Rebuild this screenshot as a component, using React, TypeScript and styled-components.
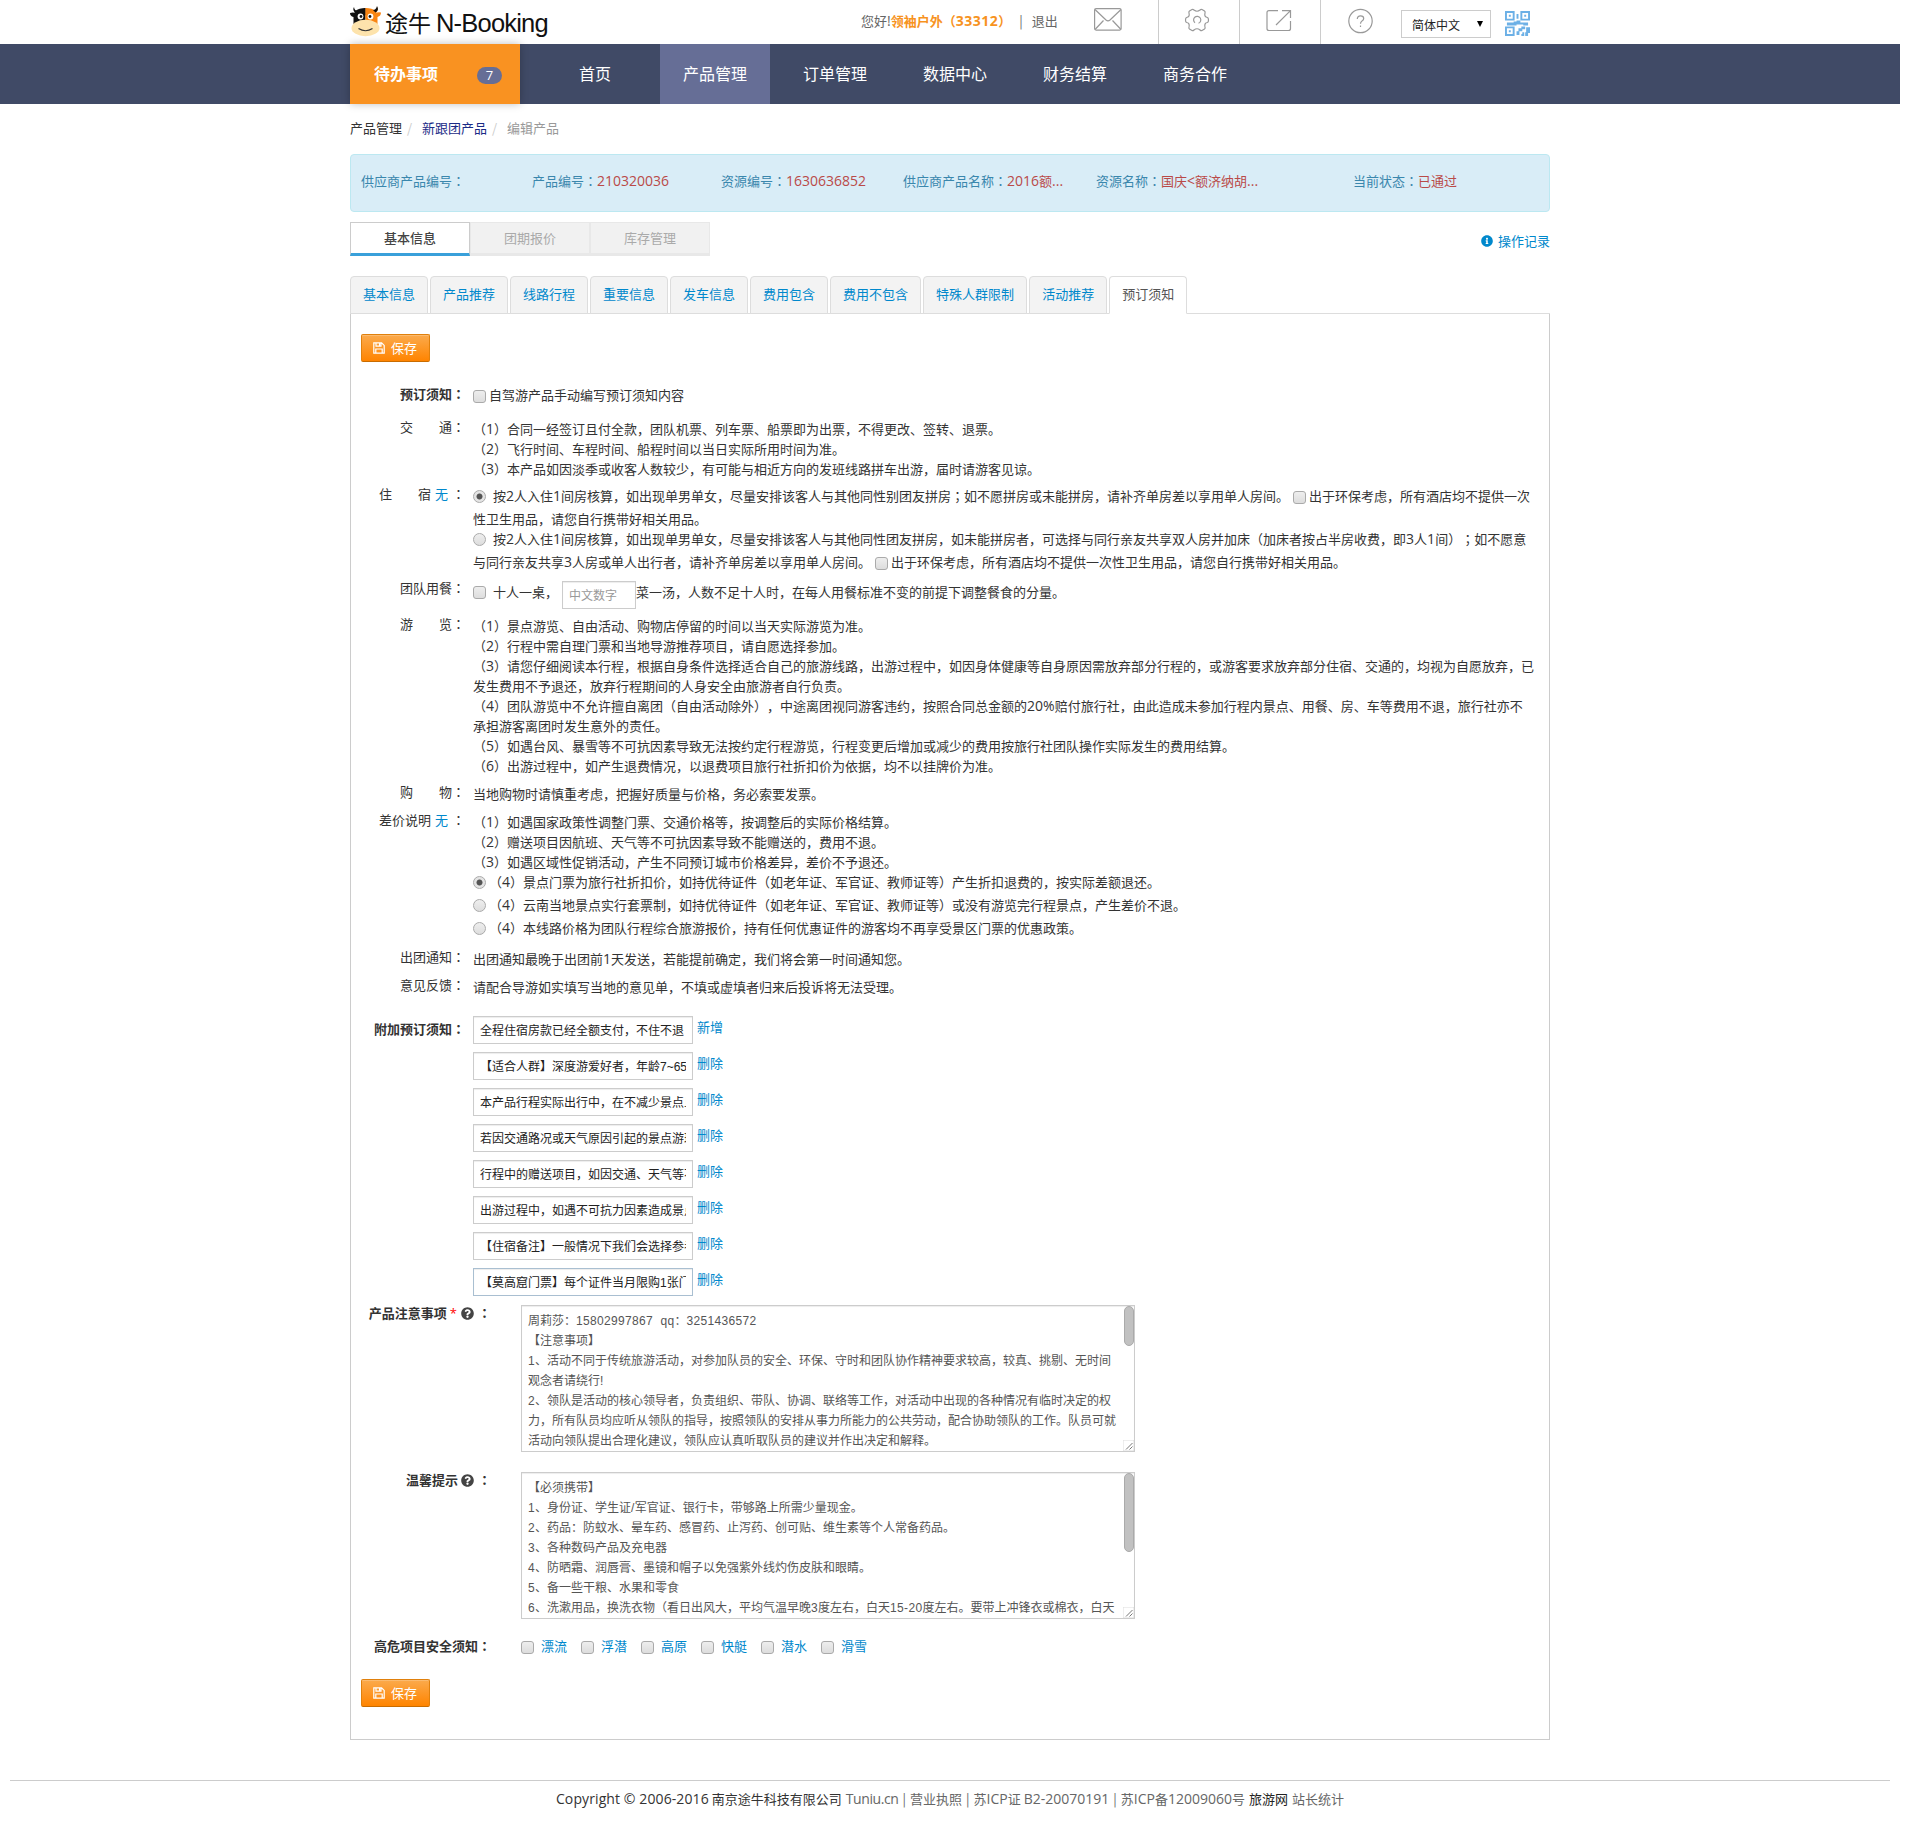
import React from "react";
import styled, { createGlobalStyle, css } from "styled-components";
import { FaInfoCircle, FaQuestionCircle } from "react-icons/fa";

const Global = createGlobalStyle`
  * { box-sizing: border-box; }
  body {
    margin: 0;
    background: #fff;
    color: #333;
    font: 13px/20px "Noto Sans CJK SC", "Open Sans", sans-serif;
    text-spacing-trim: space-all;
    overflow: hidden;
  }
  a { color: #08c; text-decoration: none; }
`;

const Latin = styled.span`
  font-family: "Open Sans", sans-serif;
  font-size: 1.077em;
  line-height: 1;
`;
const Mark = styled.span`
  font-family: "Noto Sans CJK JP", sans-serif;
`;

/* Sets Latin runs and full-width colons in their own faces. */
const T = ({ children }: { children: string }) => (
  <>
    {children.split(/([!-~©]+(?: +[!-~©]+)*|[：；])/).map((s, i) =>
      i % 2 === 0 ? s : /[：；]/.test(s) ? <Mark key={i}>{s}</Mark> : <Latin key={i}>{s}</Latin>
    )}
  </>
);

const Page = styled.div`
  width: 1900px;
  height: 1826px;
`;
const Container = styled.div`
  width: 1200px;
  margin: 0 auto;
`;

const TopBar = styled(Container)`
  display: flex;
  height: 44px;
`;
const Logo = styled.div`
  display: flex;
  width: 511px;
  color: #111;
  white-space: nowrap;
  svg { margin-top: 4px; }
`;
const LogoCn = styled.span`
  width: 51px;
  margin: 9px 0 0 4px;
  font-size: 23px;
  line-height: 26px;
`;
const LogoEn = styled.span`
  margin-top: 8px;
  font: 25.5px/30px "Liberation Sans", Arial, sans-serif;
  letter-spacing: -0.8px;
`;
const Hello = styled.div`
  width: 217px;
  padding-top: 11px;
  color: #666;
  white-space: nowrap;
  b { color: #f7931e; }
  b ${Latin} { letter-spacing: 0.5px; }
  i { font-style: normal; margin: 0 9px 0 8px; }
`;
const IconCell = styled.div<{ $w: number; $pad: number; $last?: boolean }>`
  width: ${(p) => p.$w}px;
  padding: 8px 0 0 ${(p) => p.$pad}px;
  border-right: ${(p) => (p.$last ? "0" : "1px solid #ccc")};
`;
const QrCell = styled.div`
  padding-top: 10.5px;
`;
const Lang = styled.div`
  display: flex;
  justify-content: space-between;
  width: 90px;
  height: 28px;
  margin: 10px 14px 0 0;
  padding: 0 7px 0 10px;
  border: 1px solid #ccc;
  font-size: 12px;
  line-height: 28px;
  color: #222;
`;
const Arrow = styled.span`
  width: 0;
  height: 0;
  margin-top: 10px;
  border: 3.5px solid transparent;
  border-top: 6px solid #000;
`;

const Nav = styled.nav`
  height: 60px;
  background: #404a66;
`;
const NavInner = styled(Container)`
  display: flex;
  gap: 10px;
  height: 60px;
`;
const Todo = styled.div`
  display: flex;
  align-items: center;
  justify-content: space-between;
  width: 170px;
  margin-right: 10px;
  padding: 0 18px 2px 24px;
  background: #f99221;
  box-shadow: 0 0 8px rgba(0, 0, 0, 0.25);
  color: #fff;
  font-size: 16px;
  font-weight: 700;
`;
const Badge = styled.span`
  width: 25px;
  height: 17px;
  margin-top: 5px;
  border-radius: 9px;
  background: #666e96;
  font: 13px/17px "Open Sans", sans-serif;
  text-align: center;
`;
const NavItem = styled.a<{ $on?: boolean }>`
  width: 110px;
  background: ${(p) => (p.$on ? "#666e96" : "transparent")};
  color: #fff;
  font-size: 16px;
  line-height: 58px;
  text-align: center;
`;

const Crumbs = styled.div`
  display: flex;
  height: 50px;
  padding-top: 14px;
`;
const Crumb = styled.span<{ $c?: string }>`
  color: ${(p) => p.$c || "#333"};
`;
const Slash = styled.span`
  width: 20px;
  padding-left: 5px;
  color: #ccc;
`;

const Info = styled.div`
  display: flex;
  height: 58px;
  padding: 16px 0 0 10px;
  border: 1px solid #bce8f1;
  border-radius: 4px;
  background: #d9edf7;
  color: #3a87ad;
  white-space: nowrap;
  em { font-style: normal; color: #b94a48; }
`;
const InfoItem = styled.div<{ $w: number }>`
  width: ${(p) => p.$w}px;
`;

const StepRow = styled.div`
  display: flex;
  justify-content: space-between;
  margin-top: 10px;
  height: 54px;
`;
const Steps = styled.div`
  display: flex;
`;
const Step = styled.div<{ $on?: boolean }>`
  width: 120px;
  height: 34px;
  border: 1px solid #e8e8e8;
  border-bottom: 3px solid #e8e8e8;
  background: #f1f1f1;
  color: #aaa;
  line-height: 30px;
  text-align: center;
  ${(p) => p.$on && css`
    border-color: #ccc;
    border-bottom-color: #39a0da;
    background: #fff;
    color: #444;
    font-weight: 500;
  `}
`;
const LogLink = styled.a`
  display: flex;
  align-items: center;
  gap: 5px;
  height: 20px;
  margin-top: 9px;
`;

const Tabs = styled.div`
  display: flex;
  gap: 2px;
  height: 38px;
  border-bottom: 1px solid #ddd;
`;
const Tab = styled.a<{ $on?: boolean }>`
  height: 38px;
  padding: 0 12px;
  border: 1px solid #ddd;
  border-radius: 4px 4px 0 0;
  background: #f3f3f3;
  line-height: 34px;
  ${(p) => p.$on && css`
    border-bottom-color: #fff;
    background: #fff;
    color: #555;
  `}
`;
const Panel = styled.div`
  height: 1426px;
  padding-top: 20px;
  border: 1px solid #ccc;
  border-top: 0;
`;
const Save = styled.button`
  display: flex;
  align-items: center;
  gap: 6px;
  width: 69px;
  height: 28px;
  margin: 0 0 23px 10px;
  padding: 0 0 0 11px;
  border: 1px solid #e0800c;
  border-bottom-color: #c96c00;
  border-radius: 2px;
  background: linear-gradient(#fbaa4c, #ff8400);
  box-shadow: inset 0 1px 0 rgba(255, 255, 255, 0.2);
  color: #fff;
  font: inherit;
  white-space: nowrap;
`;

const Row = styled.div<{ $h: number }>`
  display: flex;
  height: ${(p) => p.$h}px;
`;
const Label = styled.div<{ $b?: boolean; $wide?: boolean; $top?: number }>`
  flex: none;
  display: flex;
  justify-content: flex-end;
  width: ${(p) => (p.$wide ? 140 : 114)}px;
  height: 20px;
  margin: ${(p) => p.$top ?? -1}px ${(p) => (p.$wide ? 30 : 8)}px 0 0;
  font-weight: ${(p) => (p.$b ? 700 : 400)};
  white-space: nowrap;
`;
const None = styled.a`
  margin: 0 4px;
`;
const Star = styled.span`
  margin: 0 1px 0 3px;
  color: #f00;
  font-family: "Open Sans", sans-serif;
  font-weight: 400;
`;
const Help = styled.span`
  display: flex;
  align-items: center;
  margin: 0 4px 0 3px;
  color: #444;
`;
const Content = styled.div<{ $top?: number }>`
  padding-top: ${(p) => p.$top ?? 1}px;
  white-space: nowrap;
`;
const Line = styled.div<{ $gap?: number }>`
  display: flex;
  height: 20px;
  margin-bottom: ${(p) => p.$gap || 0}px;
`;
const Words = styled.div<{ $l?: number }>`
  margin-left: ${(p) => p.$l || 0}px;
`;
const Box = styled.input`
  appearance: none;
  flex: none;
  width: 13px;
  height: 13px;
  margin: 5px 0 0;
  border: 1px solid #aaa;
  border-radius: 3px;
  background: linear-gradient(#eee, #ddd);
  &[type="radio"] {
    margin-top: 4px;
    border-radius: 50%;
  }
  &[type="radio"]:checked {
    background: radial-gradient(circle, #555 0 2.6px, #e4e4e4 3.4px);
  }
`;
const Field = styled.input<{ $w: number; $focus?: boolean }>`
  width: ${(p) => p.$w}px;
  height: 28px;
  padding: 0 6px 1px;
  border: 1px solid ${(p) => (p.$focus ? "#a9bfd1" : "#ccc")};
  border-radius: 0;
  box-shadow: inset 0 1px 1px rgba(0, 0, 0, 0.075);
  color: #222;
  font: 12px/18px "Liberation Sans", "Noto Sans CJK SC", sans-serif;
  outline: 0;
  &::placeholder { color: #999; }
`;
const MealLine = styled.div`
  display: flex;
  height: 28px;
  ${Words} { padding-top: 1px; }
  ${Field} { padding: 1px 6px 0; }
`;
const Extra = styled.div`
  display: flex;
  gap: 4px;
  height: 36px;
  a { margin-top: 1px; }
`;
const AreaFrame = styled.div`
  position: relative;
  width: 614px;
  height: 147px;
  padding: 4px 6px 0;
  overflow: hidden;
  border: 1px solid #ccc;
  box-shadow: inset 0 1px 1px rgba(0, 0, 0, 0.075);
  color: #555;
  font-size: 12px;
  ${Latin} {
    font-family: "Liberation Sans", Arial, sans-serif;
    font-size: 12px;
    letter-spacing: 0.33px;
    white-space: pre;
  }
  ${Mark} { font-family: "Noto Sans CJK SC", sans-serif; }
`;
const Thumb = styled.span<{ $h: number }>`
  position: absolute;
  top: 0;
  right: 0;
  width: 10px;
  height: ${(p) => p.$h}px;
  border: 1px solid #aaa;
  border-radius: 5px;
  background: #c1c1c1;
`;
const Grip = styled.svg`
  position: absolute;
  right: 0;
  bottom: 0;
`;
const Risks = styled.div`
  display: flex;
  margin-top: -1px;
`;
const Risk = styled.label`
  display: flex;
  gap: 7px;
  width: 60px;
  color: #08c;
`;
const Footer = styled.footer`
  display: flex;
  justify-content: center;
  gap: 4px;
  margin: 40px 10px 0;
  padding-top: 8px;
  border-top: 1px solid #ccc;
  white-space: pre;
`;
const Foot = styled.span<{ $c?: string; $ls?: number }>`
  color: ${(p) => p.$c || "#666"};
  ${Latin} { letter-spacing: ${(p) => p.$ls || 0}px; }
`;

const Cow = () => (
  <svg width="31" height="33" viewBox="0 0 31 33">
    <path d="M4 3 Q4.500 7 8 7 L15.500 4 V20 H3.500 V13 Q0 12 0 9 Q3 8 5.500 9 Q2 6 4 3Z" fill="#111" />
    <path d="M27 3 Q26.500 7 23 7 L15.500 4 V20 H27.500 V13 Q31 12 31 8.500 Q28 8 25.500 9 Q29 6 27 3Z" fill="#f98513" />
    <path d="M5 7 Q9 4 15.500 4 V11 L8 14 L4 11Z" fill="#111" />
    <path d="M15.500 4 Q22 4 26 7 L27 12 L15.500 14Z" fill="#f98513" />
    <path d="M27 2 Q26 6 23 6 L25.500 8.500 Q29.500 6 27 2Z" fill="#111" />
    <circle cx="10.500" cy="12.500" r="2.900" fill="#fff" />
    <circle cx="20.500" cy="12.500" r="2.900" fill="#fff" />
    <circle cx="11" cy="12.500" r="1.400" fill="#111" />
    <circle cx="20" cy="12.500" r="1.400" fill="#111" />
    <ellipse cx="15.500" cy="24" rx="14" ry="8.300" fill="#fde3ac" />
    <path d="M8.500 24.500 Q15.500 29 22.500 24.500" fill="none" stroke="#333" strokeWidth="1.200" />
  </svg>
);

const Floppy = () => (
  <svg width="12" height="12" viewBox="0 0 12 12" fill="none" stroke="#fff" strokeWidth="1.200">
    <path d="M.8 .8 H8.600 L11.200 3.400 V11.200 H.8Z M3 .8 V4.200 H8 V.8 M2.800 11 V7 H9.200 V11 M6.600 1.300 V3.400" />
  </svg>
);

const stroke = { fill: "none", stroke: "#999", strokeWidth: 1.2 };
const Mail = () => (
  <svg width="28" height="23" viewBox="0 0 28 23" {...stroke}>
    <rect x=".6" y=".6" width="26.500" height="21.500" rx="1.500" />
    <path d="M1 1.500 L12 12 Q14 13.800 16 12 L27 1.500 M1 21.500 L9.500 12.500 M27 21.500 L18.500 12.500" />
  </svg>
);
const Gear = () => (
  <svg width="26" height="24" viewBox="0 0 26 24" {...stroke}>
    <path d="M8 1.500 Q9 1 10 2 Q13 4.500 16 2 Q17 1 18 1.500 L20.500 3 Q21.500 3.800 21 5 Q20 9 23.500 9.500 Q24.500 10 24.500 12 Q24.500 14 23.500 14.500 Q20 15 21 19 Q21.500 20.200 20.500 21 L18 22.500 Q17 23 16 22 Q13 19.500 10 22 Q9 23 8 22.500 L5.500 21 Q4.500 20.200 5 19 Q6 15 2.500 14.500 Q1.500 14 1.500 12 Q1.500 10 2.500 9.500 Q6 9 5 5 Q4.500 3.800 5.500 3Z" />
    <path d="M11 14.800 A3.600 3.600 0 1 1 14.500 15.300" />
  </svg>
);
const Share = () => (
  <svg width="26" height="25" viewBox="0 0 26 25" {...stroke}>
    <path d="M12 2.600 H3 Q1 2.600 1 4.600 V20.500 Q1 22.500 3 22.500 H22.500 Q24.500 22.500 24.500 20.500 V13 M16 2.600 H24.500 V10 M24.500 2.600 L10 17" />
  </svg>
);
const Ask = () => (
  <svg width="26" height="26" viewBox="0 0 26 26" {...stroke}>
    <circle cx="12.500" cy="13" r="11.700" />
    <path d="M9.300 11 Q9.300 7.800 12.500 7.800 Q15.700 7.800 15.700 10.500 Q15.700 12 14 13 Q12.500 14 12.500 15.800 M12.500 17.500 V19" />
  </svg>
);
const Qr = () => (
  <svg width="25" height="25" viewBox="0 0 26 26" fill="#6cb0e6">
    <path fillRule="evenodd" d="M0 0H10V10H0Z M2 2V8H8V2Z M4 4H6V6H4Z M16 0H26V10H16Z M18 2V8H24V2Z M20 4H22V6H20Z M0 16H10V26H0Z M2 18V24H8V18Z M4 20H6V22H4Z" />
    <path d="M12 3H14V8H12Z M9 11H12V10H16V12H24V15H19V14H12V15H2V12H9Z M17 16H21V19H18V21H15V25H12V21H14V18H17Z M22 17H26V23H24V26H21V22H22Z M18 22H20V26H17V24H18Z" />
  </svg>
);

const extras = [
  "全程住宿房款已经全额支付，不住不退",
  "【适合人群】深度游爱好者，年龄7~65周岁",
  "本产品行程实际出行中，在不减少景点且征得客人同意",
  "若因交通路况或天气原因引起的景点游玩时间",
  "行程中的赠送项目，如因交通、天气等不可抗因素",
  "出游过程中，如遇不可抗力因素造成景点未能游览",
  "【住宿备注】一般情况下我们会选择参考酒店",
  "【莫高窟门票】每个证件当月限购1张门票",
];

const Lines = ({ items }: { items: string[] }) => (
  <>
    {items.map((l) => (
      <Line key={l}><Words><T>{l}</T></Words></Line>
    ))}
  </>
);

const Area = ({ lines, thumb }: { lines: string[]; thumb: number }) => (
  <AreaFrame>
    <Lines items={lines} />
    <Thumb $h={thumb} />
    <Grip width="11" height="11" viewBox="0 0 11 11">
      <path d="M0 0H11V11H0Z" fill="#fff" stroke="#ddd" />
      <path d="M3 9.500 L9.500 3 M6.500 9.500 L9.500 6.500" stroke="#777" />
    </Grip>
  </AreaFrame>
);

const SaveButton = () => (
  <Save><Floppy />保存</Save>
);

export default function App() {
  return (
    <Page>
      <Global />
      <TopBar>
        <Logo>
          <Cow />
          <LogoCn>途牛</LogoCn>
          <LogoEn>N-Booking</LogoEn>
        </Logo>
        <Hello>
          <T>您好!</T><b><T>领袖户外（33312）</T></b><i>|</i>退出
        </Hello>
        <IconCell $w={81} $pad={16}><Mail /></IconCell>
        <IconCell $w={81} $pad={25}><Gear /></IconCell>
        <IconCell $w={81} $pad={26}><Share /></IconCell>
        <IconCell $w={80} $pad={27} $last><Ask /></IconCell>
        <Lang>简体中文<Arrow /></Lang>
        <QrCell><Qr /></QrCell>
      </TopBar>
      <Nav>
        <NavInner>
          <Todo>待办事项<Badge>7</Badge></Todo>
          {["首页", "产品管理", "订单管理", "数据中心", "财务结算", "商务合作"].map((n, i) => (
            <NavItem key={n} $on={i === 1}>{n}</NavItem>
          ))}
        </NavInner>
      </Nav>
      <Container>
        <Crumbs>
          <Crumb>产品管理</Crumb><Slash>/</Slash>
          <Crumb $c="#1a2b86">新跟团产品</Crumb><Slash>/</Slash>
          <Crumb $c="#999">编辑产品</Crumb>
        </Crumbs>
        <Info>
          <InfoItem $w={171}><T>供应商产品编号：</T></InfoItem>
          <InfoItem $w={189}><T>产品编号：</T><em><T>210320036</T></em></InfoItem>
          <InfoItem $w={182}><T>资源编号：</T><em><T>1630636852</T></em></InfoItem>
          <InfoItem $w={193}><T>供应商产品名称：</T><em><T>2016额...</T></em></InfoItem>
          <InfoItem $w={257}><T>资源名称：</T><em><T>{"国庆<额济纳胡..."}</T></em></InfoItem>
          <InfoItem $w={120}><T>当前状态：</T><em>已通过</em></InfoItem>
        </Info>
        <StepRow>
          <Steps>
            <Step $on>基本信息</Step><Step>团期报价</Step><Step>库存管理</Step>
          </Steps>
          <LogLink><FaInfoCircle size={12} />操作记录</LogLink>
        </StepRow>
        <Tabs>
          {["基本信息", "产品推荐", "线路行程", "重要信息", "发车信息", "费用包含", "费用不包含", "特殊人群限制", "活动推荐", "预订须知"].map((n, i) => (
            <Tab key={n} $on={i === 9}>{n}</Tab>
          ))}
        </Tabs>
        <Panel>
          <SaveButton />
          <Row $h={33}>
            <Label $b><T>预订须知：</T></Label>
            <Content $top={0}>
              <Line><Box type="checkbox" /><Words $l={3}>自驾游产品手动编写预订须知内容</Words></Line>
            </Content>
          </Row>
          <Row $h={67}>
            <Label><T>{"交\u3000\u3000通："}</T></Label>
            <Content>
              <Lines items={[
                "（1）合同一经签订且付全款，团队机票、列车票、船票即为出票，不得更改、签转、退票。",
                "（2）飞行时间、车程时间、船程时间以当日实际所用时间为准。",
                "（3）本产品如因淡季或收客人数较少，有可能与相近方向的发班线路拼车出游，届时请游客见谅。",
              ]} />
            </Content>
          </Row>
          <Row $h={94}>
            <Label>{"住\u3000\u3000宿"}<None>无</None><T>：</T></Label>
            <Content>
              <Line $gap={3}>
                <Box type="radio" name="room" defaultChecked />
                <Words $l={7}><T>按2人入住1间房核算，如出现单男单女，尽量安排该客人与其他同性别团友拼房；如不愿拼房或未能拼房，请补齐单房差以享用单人房间。</T></Words>
                <Words $l={4} /><Box type="checkbox" />
                <Words $l={3}>出于环保考虑，所有酒店均不提供一次</Words>
              </Line>
              <Line>性卫生用品，请您自行携带好相关用品。</Line>
              <Line $gap={3}>
                <Box type="radio" name="room" />
                <Words $l={7}><T>按2人入住1间房核算，如出现单男单女，尽量安排该客人与其他同性团友拼房，如未能拼房者，可选择与同行亲友共享双人房并加床（加床者按占半房收费，即3人1间）；如不愿意</T></Words>
              </Line>
              <Line>
                <Words><T>与同行亲友共享3人房或单人出行者，请补齐单房差以享用单人房间。</T></Words>
                <Words $l={4} /><Box type="checkbox" />
                <Words $l={3}>出于环保考虑，所有酒店均不提供一次性卫生用品，请您自行携带好相关用品。</Words>
              </Line>
            </Content>
          </Row>
          <Row $h={36}>
            <Label><T>团队用餐：</T></Label>
            <Content $top={2}>
              <MealLine>
                <Box type="checkbox" />
                <Words $l={7}>十人一桌，</Words>
                <Words $l={4} />
                <Field $w={74} placeholder="中文数字" />
                <Words>菜一汤，人数不足十人时，在每人用餐标准不变的前提下调整餐食的分量。</Words>
              </MealLine>
            </Content>
          </Row>
          <Row $h={168}>
            <Label><T>{"游\u3000\u3000览："}</T></Label>
            <Content>
              <Lines items={[
                "（1）景点游览、自由活动、购物店停留的时间以当天实际游览为准。",
                "（2）行程中需自理门票和当地导游推荐项目，请自愿选择参加。",
                "（3）请您仔细阅读本行程，根据自身条件选择适合自己的旅游线路，出游过程中，如因身体健康等自身原因需放弃部分行程的，或游客要求放弃部分住宿、交通的，均视为自愿放弃，已",
                "发生费用不予退还，放弃行程期间的人身安全由旅游者自行负责。",
                "（4）团队游览中不允许擅自离团（自由活动除外），中途离团视同游客违约，按照合同总金额的20%赔付旅行社，由此造成未参加行程内景点、用餐、房、车等费用不退，旅行社亦不",
                "承担游客离团时发生意外的责任。",
                "（5）如遇台风、暴雪等不可抗因素导致无法按约定行程游览，行程变更后增加或减少的费用按旅行社团队操作实际发生的费用结算。",
                "（6）出游过程中，如产生退费情况，以退费项目旅行社折扣价为依据，均不以挂牌价为准。",
              ]} />
            </Content>
          </Row>
          <Row $h={28}>
            <Label><T>{"购\u3000\u3000物："}</T></Label>
            <Content>当地购物时请慎重考虑，把握好质量与价格，务必索要发票。</Content>
          </Row>
          <Row $h={137}>
            <Label>差价说明<None>无</None><T>：</T></Label>
            <Content>
              <Lines items={[
                "（1）如遇国家政策性调整门票、交通价格等，按调整后的实际价格结算。",
                "（2）赠送项目因航班、天气等不可抗因素导致不能赠送的，费用不退。",
                "（3）如遇区域性促销活动，产生不同预订城市价格差异，差价不予退还。",
              ]} />
              {[
                "（4）景点门票为旅行社折扣价，如持优待证件（如老年证、军官证、教师证等）产生折扣退费的，按实际差额退还。",
                "（4）云南当地景点实行套票制，如持优待证件（如老年证、军官证、教师证等）或没有游览完行程景点，产生差价不退。",
                "（4）本线路价格为团队行程综合旅游报价，持有任何优惠证件的游客均不再享受景区门票的优惠政策。",
              ].map((t, i) => (
                <Line key={t} $gap={3}>
                  <Box type="radio" name="diff" defaultChecked={i === 0} />
                  <Words $l={3}><T>{t}</T></Words>
                </Line>
              ))}
            </Content>
          </Row>
          <Row $h={28}>
            <Label><T>出团通知：</T></Label>
            <Content><T>出团通知最晚于出团前1天发送，若能提前确定，我们将会第一时间通知您。</T></Content>
          </Row>
          <Row $h={40}>
            <Label><T>意见反馈：</T></Label>
            <Content>请配合导游如实填写当地的意见单，不填或虚填者归来后投诉将无法受理。</Content>
          </Row>
          <Row $h={289}>
            <Label $b $top={3}><T>附加预订须知：</T></Label>
            <Content $top={0}>
              {extras.map((v, i) => (
                <Extra key={v}>
                  <Field $w={220} $focus={i === 7} defaultValue={v} />
                  <a>{i ? "删除" : "新增"}</a>
                </Extra>
              ))}
            </Content>
          </Row>
          <Row $h={167}>
            <Label $b $wide $top={-2}>产品注意事项<Star>*</Star><Help><FaQuestionCircle size={13} /></Help><T>：</T></Label>
            <Area thumb={40} lines={[
              "周莉莎：15802997867  qq：3251436572",
              "【注意事项】",
              "1、活动不同于传统旅游活动，对参加队员的安全、环保、守时和团队协作精神要求较高，较真、挑剔、无时间",
              "观念者请绕行!",
              "2、领队是活动的核心领导者，负责组织、带队、协调、联络等工作，对活动中出现的各种情况有临时决定的权",
              "力，所有队员均应听从领队的指导，按照领队的安排从事力所能力的公共劳动，配合协助领队的工作。队员可就",
              "活动向领队提出合理化建议，领队应认真听取队员的建议并作出决定和解释。",
            ]} />
          </Row>
          <Row $h={165}>
            <Label $b $wide $top={-2}>温馨提示<Help><FaQuestionCircle size={13} /></Help><T>：</T></Label>
            <Area thumb={79} lines={[
              "【必须携带】",
              "1、身份证、学生证/军官证、银行卡，带够路上所需少量现金。",
              "2、药品：防蚊水、晕车药、感冒药、止泻药、创可贴、维生素等个人常备药品。",
              "3、各种数码产品及充电器",
              "4、防晒霜、润唇膏、墨镜和帽子以免强紫外线灼伤皮肤和眼睛。",
              "5、备一些干粮、水果和零食",
              "6、洗漱用品，换洗衣物（看日出风大，平均气温早晚3度左右，白天15-20度左右。要带上冲锋衣或棉衣，白天",
            ]} />
          </Row>
          <Row $h={42}>
            <Label $b $wide><T>高危项目安全须知：</T></Label>
            <Risks>
              {["漂流", "浮潜", "高原", "快艇", "潜水", "滑雪"].map((r) => (
                <Risk key={r}><Box type="checkbox" />{r}</Risk>
              ))}
            </Risks>
          </Row>
          <SaveButton />
        </Panel>
      </Container>
      <Footer>
        <Foot $c="#333" $ls={0.1}><T>Copyright © 2006-2016</T> 南京途牛科技有限公司</Foot>
        <Foot $ls={-0.4}><T>Tuniu.cn</T></Foot><Foot>|</Foot>
        <Foot>营业执照</Foot><Foot>|</Foot>
        <Foot><T>苏ICP证</T> <T>B2-20070191</T></Foot><Foot>|</Foot>
        <Foot><T>苏ICP备12009060号</T></Foot>
        <Foot $c="#222">旅游网</Foot>
        <Foot>站长统计</Foot>
      </Footer>
    </Page>
  );
}
